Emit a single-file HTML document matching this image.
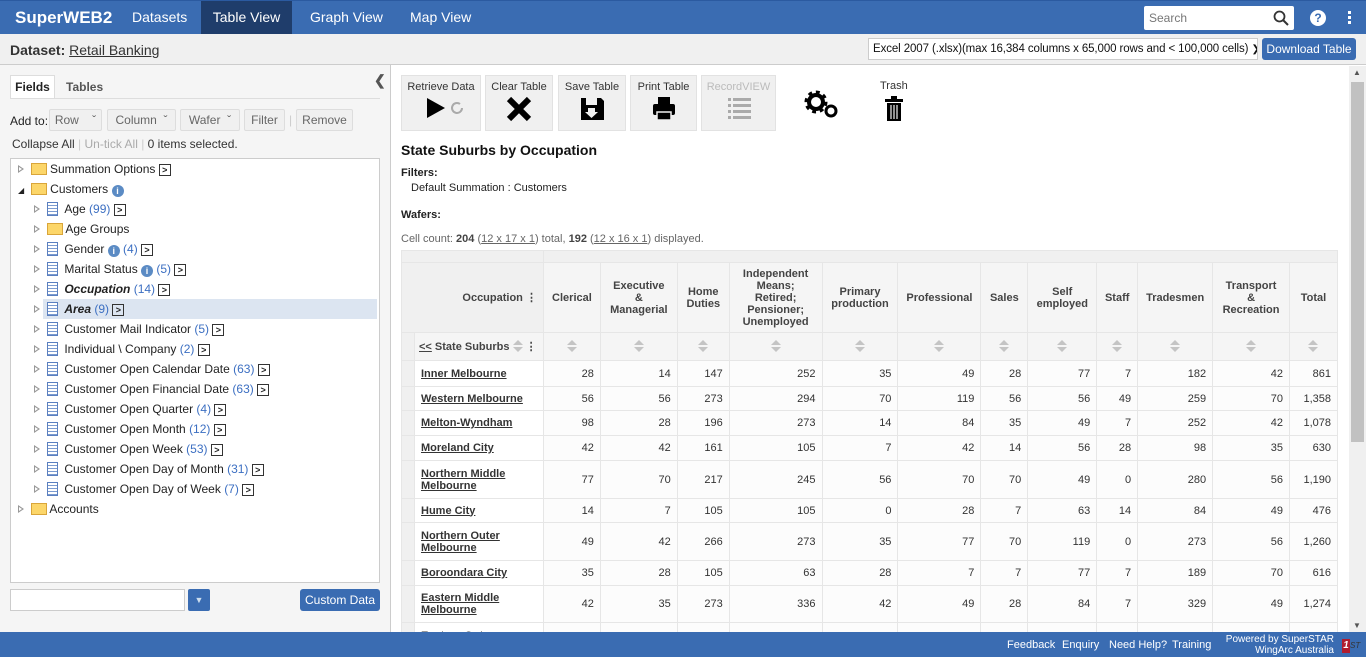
<!DOCTYPE html>
<html><head><meta charset="utf-8">
<style>
*{box-sizing:border-box;margin:0;padding:0}
body{width:1366px;height:657px;overflow:hidden;font-family:"Liberation Sans",Arial,sans-serif;font-size:12px;color:#222;background:#fff;position:relative}
.a{position:absolute}
#nav{left:0;top:0;width:1366px;height:34px;background:#3a6cb2;border-top:1px solid #2b5aa0}
#nav .t{position:absolute;top:0;height:34px;line-height:33px;color:#fff;font-size:14px}
#bar{left:0;top:34px;width:1366px;height:31px;background:#f0f0f0;border-bottom:1px solid #ccc}
#left{left:0;top:65px;width:391px;height:567px;background:#f5f5f5;border-right:1px solid #ccc}
.btn{position:absolute;height:22px;border:1px solid #ddd;background:#f0f0f0;border-radius:2px;color:#666;line-height:20px;text-align:center}
.tree{left:10px;top:158px;width:370px;height:425px;background:#fff;border:1px solid #ccc}
.ti{position:absolute;height:20px;line-height:20px;white-space:nowrap;font-size:12px}
.arr{display:inline-block;width:0;height:0;border-left:6px solid #999;border-top:4px solid transparent;border-bottom:4px solid transparent;position:relative}
.arr:after{content:"";position:absolute;left:-5px;top:-2px;border-left:3px solid #fff;border-top:2px solid transparent;border-bottom:2px solid transparent}
.fold{display:inline-block;width:16px;height:12px;background:#fcd669;border:1px solid #d9a53a;vertical-align:-2px}
.doc{display:inline-block;width:11px;height:14px;border:1px solid #5a7fbf;background:repeating-linear-gradient(#fff 0 2px,#7b9bd0 2px 3px);vertical-align:-3px}
.cnt{color:#3c6fc2}
.go{display:inline-block;width:12px;height:12px;border:1px solid #333;font-size:9px;line-height:10px;text-align:center;font-weight:bold;vertical-align:0px}
.info{display:inline-block;width:12px;height:12px;border-radius:50%;background:#5b8bc4;color:#fff;font-size:9px;line-height:12px;text-align:center;font-weight:bold;vertical-align:-1px}
.tb{position:absolute;top:75px;height:56px;background:#f0f0f0;border:1px solid #e2e2e2;text-align:center;font-size:11px;color:#333;padding-top:5px}
table{border-collapse:collapse;table-layout:fixed;position:absolute;left:401px;top:250px;font-size:11px;color:#333}
td{border:1px solid #e6e6e6;padding:0 6px;text-align:right;background:#fcfcfc;white-space:nowrap}
thead td{background:#f5f5f5;text-align:center;font-weight:bold;color:#444;line-height:12px}
td.rh{text-align:left;font-weight:bold;background:#fff;line-height:12px}
td.rh u{color:#333}
.st{background:#f0f0f0!important}
.sort{display:inline-block;width:10px;height:12px;position:relative;vertical-align:-2px}
.sort:before{content:"";position:absolute;left:0;top:0;border-left:5px solid transparent;border-right:5px solid transparent;border-bottom:5px solid #c4c4c4}
.sort:after{content:"";position:absolute;left:0;top:7px;border-left:5px solid transparent;border-right:5px solid transparent;border-top:5px solid #c4c4c4}
#foot{left:0;top:632px;width:1366px;height:25px;background:#3a6cb2;color:#fff;font-size:11px}
</style></head><body>
<div id="nav" class="a">
 <div class="t" style="left:15px;font-weight:bold;font-size:17px">SuperWEB2</div>
 <div class="t" style="left:132px">Datasets</div>
 <div class="t" style="left:201px;width:91px;background:#1f3d6b;text-align:center">Table View</div>
 <div class="t" style="left:310px">Graph View</div>
 <div class="t" style="left:410px">Map View</div>
 <div class="a" style="left:1144px;top:5px;width:150px;height:24px;background:#fff;border-radius:2px;color:#777;font-size:12px;line-height:24px;padding-left:5px">Search
  <svg class="a" style="right:5px;top:4px" width="16" height="16" viewBox="0 0 16 16"><circle cx="6.5" cy="6.5" r="5" fill="none" stroke="#333" stroke-width="1.8"/><path d="M10 10l5 5" stroke="#333" stroke-width="2"/></svg></div>
 <div class="a" style="left:1310px;top:9px;width:16px;height:16px;border-radius:50%;background:#fff;color:#3a6cb2;font-weight:bold;text-align:center;line-height:16px;font-size:12px">?</div>
 <div class="a" style="left:1348px;top:10px;width:3px;height:3px;background:#fff;box-shadow:0 5px 0 #fff,0 10px 0 #fff"></div>
</div>
<div id="bar" class="a">
 <div class="a" style="left:10px;top:8px;font-size:14px;color:#333"><b>Dataset:</b> <u>Retail Banking</u></div>
 <div class="a" style="left:868px;top:4px;width:390px;height:22px;background:#fff;border:1px solid #ccc;font-size:11.5px;line-height:20px;padding-left:4px;color:#111;white-space:nowrap;overflow:hidden;letter-spacing:-0.1px">Excel 2007 (.xlsx)(max 16,384 columns x 65,000 rows and &lt; 100,000 cells) <span style="font-size:10px">&#10095;</span></div>
 <div class="a" style="left:1262px;top:4px;width:94px;height:22px;background:#3a6cb2;border-radius:3px;color:#fff;font-size:12px;line-height:22px;text-align:center">Download Table</div>
</div>
<div id="left" class="a">
 <div class="a" style="left:10px;top:10px;width:45px;height:24px;background:#fff;border:1px solid #ddd;border-bottom:none;font-weight:bold;text-align:center;line-height:22px">Fields</div>
 <div class="a" style="left:66px;top:15px;color:#555;font-weight:bold">Tables</div>
 <div class="a" style="left:10px;top:33px;width:370px;border-top:1px solid #ddd"></div>
 <div class="a" style="left:374px;top:7px;font-size:14px;color:#555;font-weight:bold">&#10094;</div>
 <div class="a" style="left:10px;top:49px">Add to:</div>
 <div class="btn" style="left:49px;top:44px;width:53px">Row &nbsp;&nbsp; &#711;</div>
 <div class="btn" style="left:107px;top:44px;width:69px">Column &nbsp;&#711;</div>
 <div class="btn" style="left:180px;top:44px;width:60px">Wafer &nbsp;&#711;</div>
 <div class="btn" style="left:244px;top:44px;width:41px">Filter</div>
 <div class="a" style="left:289px;top:48px;color:#ccc">|</div>
 <div class="btn" style="left:296px;top:44px;width:57px">Remove</div>
 <div class="a" style="left:12px;top:72px;color:#333">Collapse All <span style="color:#ccc">|</span> <span style="color:#aaa">Un-tick All</span> <span style="color:#ccc">|</span> 0 items selected.</div>
</div>
<div class="a tree">
 <div class="ti" style="left:7px;top:0"><span class="arr"></span> &nbsp;<span class="fold" style="background:#fcd669"></span> Summation Options <span class="go">&gt;</span></div>
 <div class="ti" style="left:7px;top:20px"><span style="font-size:8px">&#9698;</span> &nbsp;<span class="fold"></span> Customers <span class="info">i</span></div>
 <div class="ti" style="left:23px;top:40px"><span class="arr"></span> &nbsp;<span class="doc"></span> &nbsp;Age <span class="cnt">(99)</span> <span class="go">&gt;</span></div>
 <div class="ti" style="left:23px;top:60px"><span class="arr"></span> &nbsp;<span class="fold"></span> Age Groups</div>
 <div class="ti" style="left:23px;top:80px"><span class="arr"></span> &nbsp;<span class="doc"></span> &nbsp;Gender <span class="info">i</span> <span class="cnt">(4)</span> <span class="go">&gt;</span></div>
 <div class="ti" style="left:23px;top:100px"><span class="arr"></span> &nbsp;<span class="doc"></span> &nbsp;Marital Status <span class="info">i</span> <span class="cnt">(5)</span> <span class="go">&gt;</span></div>
 <div class="ti" style="left:23px;top:120px"><span class="arr"></span> &nbsp;<span class="doc"></span> &nbsp;<i><b>Occupation</b></i> <span class="cnt">(14)</span> <span class="go">&gt;</span></div>
 <div class="a" style="left:32px;top:140px;width:334px;height:20px;background:#dce5f1"></div>
 <div class="ti" style="left:23px;top:140px"><span class="arr"></span> &nbsp;<span class="doc"></span> &nbsp;<i><b>Area</b></i> <span class="cnt">(9)</span> <span class="go">&gt;</span></div>
 <div class="ti" style="left:23px;top:160px"><span class="arr"></span> &nbsp;<span class="doc"></span> &nbsp;Customer Mail Indicator <span class="cnt">(5)</span> <span class="go">&gt;</span></div>
 <div class="ti" style="left:23px;top:180px"><span class="arr"></span> &nbsp;<span class="doc"></span> &nbsp;Individual \ Company <span class="cnt">(2)</span> <span class="go">&gt;</span></div>
 <div class="ti" style="left:23px;top:200px"><span class="arr"></span> &nbsp;<span class="doc"></span> &nbsp;Customer Open Calendar Date <span class="cnt">(63)</span> <span class="go">&gt;</span></div>
 <div class="ti" style="left:23px;top:220px"><span class="arr"></span> &nbsp;<span class="doc"></span> &nbsp;Customer Open Financial Date <span class="cnt">(63)</span> <span class="go">&gt;</span></div>
 <div class="ti" style="left:23px;top:240px"><span class="arr"></span> &nbsp;<span class="doc"></span> &nbsp;Customer Open Quarter <span class="cnt">(4)</span> <span class="go">&gt;</span></div>
 <div class="ti" style="left:23px;top:260px"><span class="arr"></span> &nbsp;<span class="doc"></span> &nbsp;Customer Open Month <span class="cnt">(12)</span> <span class="go">&gt;</span></div>
 <div class="ti" style="left:23px;top:280px"><span class="arr"></span> &nbsp;<span class="doc"></span> &nbsp;Customer Open Week <span class="cnt">(53)</span> <span class="go">&gt;</span></div>
 <div class="ti" style="left:23px;top:300px"><span class="arr"></span> &nbsp;<span class="doc"></span> &nbsp;Customer Open Day of Month <span class="cnt">(31)</span> <span class="go">&gt;</span></div>
 <div class="ti" style="left:23px;top:320px"><span class="arr"></span> &nbsp;<span class="doc"></span> &nbsp;Customer Open Day of Week <span class="cnt">(7)</span> <span class="go">&gt;</span></div>
 <div class="ti" style="left:7px;top:340px"><span class="arr"></span> &nbsp;<span class="fold"></span> Accounts</div>
</div>
<div class="a" style="left:10px;top:589px;width:175px;height:22px;background:#fff;border:1px solid #ccc"></div>
<div class="a" style="left:188px;top:589px;width:22px;height:22px;background:#3a6cb2;border-radius:2px;color:#cde;text-align:center;font-size:9px;line-height:22px">&#9660;</div>
<div class="a" style="left:300px;top:589px;width:80px;height:22px;background:#3a6cb2;border-radius:3px;color:#fff;text-align:center;line-height:22px">Custom Data</div>

<div class="tb" style="left:401px;width:80px">Retrieve Data<br><svg width="50" height="30" viewBox="0 0 50 30"><path d="M11 5l18 10-18 10z" fill="#000"/><path d="M46 15a5 5 0 1 1-2-4" fill="none" stroke="#aaa" stroke-width="2"/></svg></div>
<div class="tb" style="left:485px;width:68px">Clear Table<br><svg width="30" height="30" viewBox="0 0 30 30"><path d="M5 6l20 20M25 6L5 26" stroke="#000" stroke-width="6"/></svg></div>
<div class="tb" style="left:558px;width:68px">Save Table<br><svg width="30" height="30" viewBox="0 0 30 30"><path d="M4 5h20l3 3v19H4z" fill="#000"/><rect x="9" y="5" width="11" height="7" fill="#f0f0f0"/><path d="M11 15h7v4h3l-6.5 6L8 19h3z" fill="#f0f0f0"/></svg></div>
<div class="tb" style="left:630px;width:67px">Print Table<br><svg width="30" height="30" viewBox="0 0 30 30"><rect x="9" y="4" width="12" height="7" fill="#000"/><rect x="4" y="11" width="22" height="11" rx="2" fill="#000"/><rect x="8" y="19" width="14" height="8" fill="#000" stroke="#f0f0f0" stroke-width="1.5"/></svg></div>
<div class="tb" style="left:701px;width:75px;color:#bbb">RecordVIEW<br><svg width="30" height="30" viewBox="0 0 30 30" fill="#aaa"><rect x="4" y="5" width="3" height="3"/><rect x="9" y="5" width="18" height="3"/><rect x="4" y="11" width="3" height="3"/><rect x="9" y="11" width="18" height="3"/><rect x="4" y="17" width="3" height="3"/><rect x="9" y="17" width="18" height="3"/><rect x="4" y="23" width="3" height="3"/><rect x="9" y="23" width="18" height="3"/></svg></div>
<svg class="a" style="left:802px;top:88px" width="38" height="30" viewBox="0 0 38 30"><circle cx="14" cy="14" r="9" fill="none" stroke="#000" stroke-width="5" stroke-dasharray="3.5 3.5"/><circle cx="14" cy="14" r="7" fill="none" stroke="#000" stroke-width="4"/><circle cx="29" cy="23" r="5" fill="none" stroke="#000" stroke-width="3"/></svg>
<div class="a" style="left:880px;top:80px;font-size:11px;color:#333">Trash</div>
<svg class="a" style="left:884px;top:96px" width="20" height="26" viewBox="0 0 20 26"><rect x="1" y="3" width="18" height="3" fill="#000"/><rect x="7" y="0" width="6" height="3" fill="#000"/><path d="M3 7h14v18H3z" fill="#000"/><path d="M7 9v14M10 9v14M13 9v14" stroke="#f0f0f0" stroke-width="1.2"/></svg>

<div class="a" style="left:401px;top:142px;font-size:14px;font-weight:bold;color:#111">State Suburbs by Occupation</div>
<div class="a" style="left:401px;top:167px;font-weight:bold;font-size:11px">Filters:</div>
<div class="a" style="left:411px;top:182px;font-size:11px">Default Summation : Customers</div>
<div class="a" style="left:401px;top:209px;font-weight:bold;font-size:11px">Wafers:</div>
<div class="a" style="left:401px;top:233px;font-size:11px;color:#666">Cell count: <b style="color:#444">204</b> (<u>12 x 17 x 1</u>) total, <b style="color:#444">192</b> (<u>12 x 16 x 1</u>) displayed.</div>

<div class="a" style="left:401px;top:250px;width:937px;height:382px;overflow:hidden">
<table style="left:0;top:0">
<colgroup><col style="width:13px"><col style="width:129px"><col style="width:57px"><col style="width:77px"><col style="width:52px"><col style="width:93px"><col style="width:76px"><col style="width:83px"><col style="width:47px"><col style="width:69px"><col style="width:41px"><col style="width:75px"><col style="width:77px"><col style="width:48px"></colgroup>
<thead>
<tr style="height:12px"><td colspan="2" class="st"></td><td colspan="12" class="st"></td></tr>
<tr style="height:70px"><td colspan="2" style="text-align:right;background:#f0f0f0">Occupation &#8942;</td><td>Clerical</td><td>Executive<br>&amp;<br>Managerial</td><td>Home<br>Duties</td><td>Independent<br>Means;<br>Retired;<br>Pensioner;<br>Unemployed</td><td>Primary<br>production</td><td>Professional</td><td>Sales</td><td>Self<br>employed</td><td>Staff</td><td>Tradesmen</td><td>Transport<br>&amp;<br>Recreation</td><td>Total</td></tr>
<tr style="height:28px"><td class="st"></td><td style="text-align:left;padding:0 4px"><u>&lt;&lt;</u> State Suburbs <span class="sort"></span> &#8942;</td><td><span class="sort"></span></td><td><span class="sort"></span></td><td><span class="sort"></span></td><td><span class="sort"></span></td><td><span class="sort"></span></td><td><span class="sort"></span></td><td><span class="sort"></span></td><td><span class="sort"></span></td><td><span class="sort"></span></td><td><span class="sort"></span></td><td><span class="sort"></span></td><td><span class="sort"></span></td></tr>
</thead>
<tbody>
<tr style="height:26px"><td class="st"></td><td class="rh"><u>Inner Melbourne</u></td><td>28</td><td>14</td><td>147</td><td>252</td><td>35</td><td>49</td><td>28</td><td>77</td><td>7</td><td>182</td><td>42</td><td>861</td></tr>
<tr style="height:24px"><td class="st"></td><td class="rh"><u>Western Melbourne</u></td><td>56</td><td>56</td><td>273</td><td>294</td><td>70</td><td>119</td><td>56</td><td>56</td><td>49</td><td>259</td><td>70</td><td>1,358</td></tr>
<tr style="height:25px"><td class="st"></td><td class="rh"><u>Melton-Wyndham</u></td><td>98</td><td>28</td><td>196</td><td>273</td><td>14</td><td>84</td><td>35</td><td>49</td><td>7</td><td>252</td><td>42</td><td>1,078</td></tr>
<tr style="height:25px"><td class="st"></td><td class="rh"><u>Moreland City</u></td><td>42</td><td>42</td><td>161</td><td>105</td><td>7</td><td>42</td><td>14</td><td>56</td><td>28</td><td>98</td><td>35</td><td>630</td></tr>
<tr style="height:38px"><td class="st"></td><td class="rh"><u>Northern Middle<br>Melbourne</u></td><td>77</td><td>70</td><td>217</td><td>245</td><td>56</td><td>70</td><td>70</td><td>49</td><td>0</td><td>280</td><td>56</td><td>1,190</td></tr>
<tr style="height:24px"><td class="st"></td><td class="rh"><u>Hume City</u></td><td>14</td><td>7</td><td>105</td><td>105</td><td>0</td><td>28</td><td>7</td><td>63</td><td>14</td><td>84</td><td>49</td><td>476</td></tr>
<tr style="height:38px"><td class="st"></td><td class="rh"><u>Northern Outer<br>Melbourne</u></td><td>49</td><td>42</td><td>266</td><td>273</td><td>35</td><td>77</td><td>70</td><td>119</td><td>0</td><td>273</td><td>56</td><td>1,260</td></tr>
<tr style="height:25px"><td class="st"></td><td class="rh"><u>Boroondara City</u></td><td>35</td><td>28</td><td>105</td><td>63</td><td>28</td><td>7</td><td>7</td><td>77</td><td>7</td><td>189</td><td>70</td><td>616</td></tr>
<tr style="height:37px"><td class="st"></td><td class="rh"><u>Eastern Middle<br>Melbourne</u></td><td>42</td><td>35</td><td>273</td><td>336</td><td>42</td><td>49</td><td>28</td><td>84</td><td>7</td><td>329</td><td>49</td><td>1,274</td></tr>
<tr style="height:38px"><td class="st"></td><td class="rh"><u>Eastern Outer<br>Melbourne</u></td><td>77</td><td>14</td><td>196</td><td>252</td><td>42</td><td>49</td><td>56</td><td>28</td><td>7</td><td>252</td><td>63</td><td>1,036</td></tr>
</tbody></table></div>
<div class="a" style="left:1349px;top:66px;width:17px;height:566px;background:#f0f0f0"></div>
<div class="a" style="left:1351px;top:82px;width:13px;height:360px;background:#c1c1c1"></div>
<div class="a" style="left:1353px;top:621px;font-size:8px;color:#555">&#9660;</div>
<div class="a" style="left:1353px;top:68px;font-size:8px;color:#555">&#9650;</div>
<div id="foot" class="a">
 <div class="a" style="left:1007px;top:7px">Feedback</div>
 <div class="a" style="left:1062px;top:7px">Enquiry</div>
 <div class="a" style="left:1109px;top:7px">Need Help?</div>
 <div class="a" style="left:1172px;top:7px">Training</div>
 <div class="a" style="left:1184px;top:2px;text-align:right;width:150px;line-height:11px;font-size:10px;white-space:nowrap">Powered by SuperSTAR<br>WingArc Australia</div>
 <div class="a" style="left:1342px;top:7px;width:8px;height:14px;background:#b01c2e;color:#fff;font-size:10px;font-weight:bold;font-style:italic;line-height:14px;text-align:center">1</div>
 <div class="a" style="left:1350px;top:9px;font-size:8px;font-style:italic;color:#333">ST</div>
</div>
</body></html>
